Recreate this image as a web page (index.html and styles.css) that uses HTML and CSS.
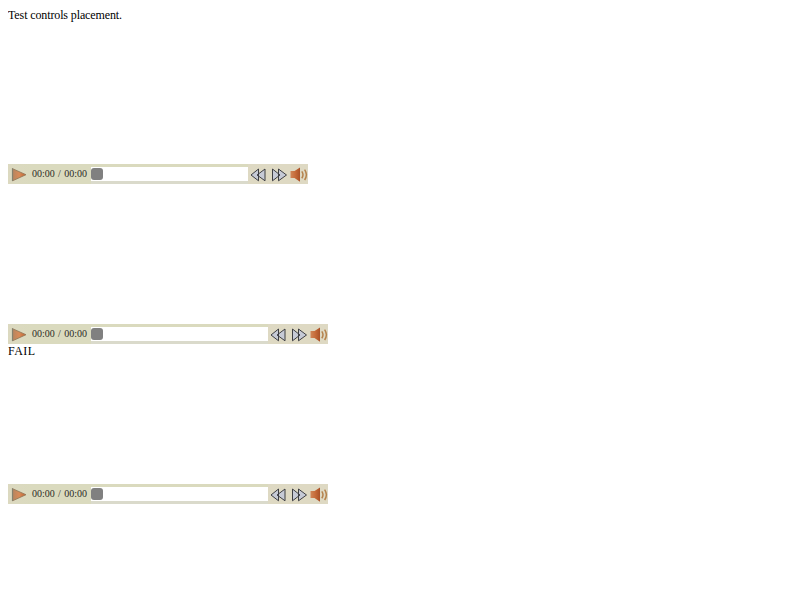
FILE: index.html
```html
<!DOCTYPE html>
<html lang="en">
<head>
<meta charset="utf-8">
<title>Controls placement</title>
<link rel="stylesheet" href="styles.css">
</head>
<body>
<svg width="0" height="0" class="defs">
  <defs>
    <linearGradient id="playFill" x1="0" y1="0" x2="1" y2="0"><stop offset="0" stop-color="#b58560"/><stop offset=".5" stop-color="#d88a58"/><stop offset="1" stop-color="#c0622a"/></linearGradient>
    <linearGradient id="soundFill" x1="0" y1="0" x2="1" y2="0"><stop offset="0" stop-color="#d08658"/><stop offset=".5" stop-color="#c66b3a"/><stop offset="1" stop-color="#a95027"/></linearGradient>
    <symbol id="play" viewBox="0 0 24 20"><path d="M4.5 4.7 18 10.7 4.5 16.8Z" fill="url(#playFill)" stroke="#94795a" stroke-width=".9"/><path d="M4.5 4.3V17" fill="none" stroke="#85816e" stroke-width="1.2"/></symbol>
    <symbol id="forward" viewBox="0 0 20 20"><path d="M4.5 5 12 11 4.5 16.8ZM10.5 5 18.5 11 10.5 16.8Z" fill="#c6cad6" stroke="#3d3e43" stroke-width="1"/></symbol>
    <symbol id="back" viewBox="0 0 20 20"><path d="M10.5 5 3 11 10.5 16.8ZM17 5 9 11 17 16.8Z" fill="#c6cad6" stroke="#3d3e43" stroke-width="1"/></symbol>
    <symbol id="sound" viewBox="0 0 20 20"><path d="M2.5 7H6.5L12 3.6V17.8L6.5 14H2.5Z" fill="url(#soundFill)"/><path d="M13.8 7.4Q16.2 10.8 13.8 14.2M16.6 5.6Q20.2 10.8 16.6 16" fill="none" stroke="#b5824c" stroke-width="1.5"/></symbol>
  </defs>
</svg>
<p class="intro">Test controls placement.</p>
<div class="video narrow"><div class="controls"><svg class="play"><use href="#play"/></svg><span class="time">00:00 / 00:00</span><div class="track"><div class="thumb"></div></div><div class="buttons"><svg><use href="#back"/></svg><svg><use href="#forward"/></svg><svg><use href="#sound"/></svg></div></div></div>
<div class="video"><div class="controls"><svg class="play"><use href="#play"/></svg><span class="time">00:00 / 00:00</span><div class="track"><div class="thumb"></div></div><div class="buttons"><svg><use href="#back"/></svg><svg><use href="#forward"/></svg><svg><use href="#sound"/></svg></div></div></div>
<p class="result">FAIL</p>
<div class="video last"><div class="controls"><svg class="play"><use href="#play"/></svg><span class="time">00:00 / 00:00</span><div class="track"><div class="thumb"></div></div><div class="buttons"><svg><use href="#back"/></svg><svg><use href="#forward"/></svg><svg><use href="#sound"/></svg></div></div></div>
</body>
</html>
```
FILE: styles.css
```css
body {
  margin: 8px;
  background: #fff;
  color: #000;
  font: 12px/14px "Liberation Serif", serif;
}
.defs { display: block; }
p { margin: 0; }
.intro { height: 16px; letter-spacing: -0.12px; }
.result { height: 14px; letter-spacing: 0.45px; }
.video {
  width: 320px;
  height: 160px;
  display: flex;
  align-items: flex-end;
}
.narrow { width: 300px; }
.last { height: 146px; }
.controls {
  width: 100%;
  height: 20px;
  display: flex;
  align-items: center;
  background: linear-gradient(to right, #dcd9c0 0, #dadabe 24px, #dadabe calc(100% - 60px), #ded9c3 calc(100% - 60px));
}
.play { width: 24px; height: 20px; flex: none; }
.time {
  width: 59px;
  flex: none;
  font-size: 10px;
  word-spacing: 0.8px;
  line-height: 20px;
  white-space: nowrap;
  color: #2c2c26;
}
.track {
  flex: 1;
  height: 14px;
  display: flex;
  align-items: center;
  background: #fff;
  border-bottom: 3px solid #dadacb;
  border-top: 3px solid #dadabe;
}
.thumb { width: 12px; height: 12px; border-radius: 3px; background: #808080; }
.buttons { display: flex; flex: none; }
.buttons svg { width: 20px; height: 20px; }
```
